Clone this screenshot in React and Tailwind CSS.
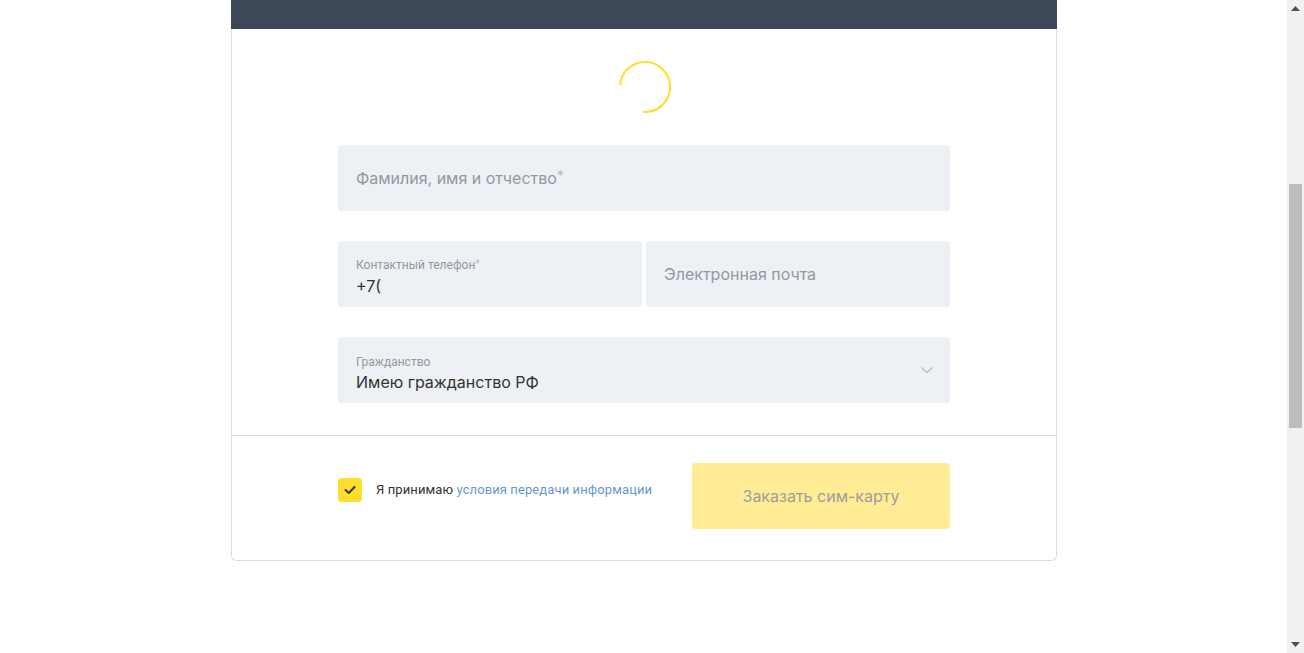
import React from "react";

const roboto = { fontFamily: "Roboto, 'Liberation Sans', Arial, sans-serif" };
const big = { fontFamily: "Inter, Roboto, 'Liberation Sans', Arial, sans-serif" };

function Field({ className = "", children }) {
  return (
    <div className={`h-[66px] rounded-[4px] bg-[#edf0f4] px-[18px] ${className}`}>
      {children}
    </div>
  );
}

export default function App() {
  return (
    <div className="flex h-[653px] w-[1304px] overflow-hidden bg-white" style={roboto}>
      <div className="flex-1 pl-[231px]">
        <div className="w-[826px]">
          <div className="h-[29px] bg-[#3d4758]" />
          <div className="rounded-b-[6px] border-x border-b border-[#dcdcdc]">
            <div className="flex justify-center pt-[32px] pb-[32px]">
              <svg width="52" height="52" viewBox="0 0 52 52" className="ml-[1px]">
                <circle
                  cx="26"
                  cy="26"
                  r="25"
                  fill="none"
                  stroke="#ffdd2d"
                  strokeWidth="2"
                  strokeDasharray="117 200"
                  transform="rotate(185 26 26)"
                />
              </svg>
            </div>
            <div className="flex flex-col gap-[30px] px-[106px] pb-[32px]">
              <Field className="flex items-center">
                <span className="text-[16px] text-[#9299a2]" style={big}>
                  Фамилия, имя и отчество<span className="relative top-[-3px] text-[14px] text-[#b4b9c0]">*</span>
                </span>
              </Field>
              <div className="flex gap-[4px]">
                <Field className="flex flex-1 flex-col justify-center pt-[5px]">
                  <span className="text-[12px] leading-[15px] text-[#9299a2]">
                    Контактный телефон<span className="relative top-[-2px] text-[10px] text-[#b4b9c0]">*</span>
                  </span>
                  <span className="mt-[3px] text-[16px] leading-[20px] text-[#333333]" style={big}>+7(</span>
                </Field>
                <Field className="flex flex-1 items-center">
                  <span className="text-[16px] text-[#9299a2]" style={big}>Электронная почта</span>
                </Field>
              </div>
              <Field className="flex items-center justify-between">
                <div className="flex flex-col pt-[7px]">
                  <span className="text-[12px] leading-[15px] text-[#9299a2]">Гражданство</span>
                  <span className="mt-[2px] text-[16px] leading-[20px] text-[#333333]" style={big}>Имею гражданство РФ</span>
                </div>
                <svg width="14" height="8" viewBox="0 0 14 8" className="mr-[-2px]">
                  <path d="M1.5 1.5 L7 6.5 L12.5 1.5" fill="none" stroke="#9299a2" strokeWidth="1" />
                </svg>
              </Field>
            </div>
            <div className="flex items-start justify-between border-t border-[#dcdcdc] px-[106px] pt-[27px] pb-[31px]">
              <div className="mt-[15px] flex items-center">
                <div className="flex h-[24px] w-[24px] items-center justify-center rounded-[4px] bg-[#ffdd2d]">
                  <svg width="14" height="12" viewBox="0 0 14 12">
                    <path d="M2.5 6 L5.8 9 L11.5 3" fill="none" stroke="#333333" strokeWidth="2" strokeLinecap="round" strokeLinejoin="round" />
                  </svg>
                </div>
                <span className="ml-[14px] text-[13px] tracking-[0.1px] text-[#333333]">
                  Я принимаю <span className="text-[#6699cc]">условия передачи информации</span>
                </span>
              </div>
              <div className="flex h-[66px] w-[258px] items-center justify-center rounded-[4px] bg-[#ffec94]">
                <span className="text-[16px] text-[#9d9d9d]" style={big}>Заказать сим-карту</span>
              </div>
            </div>
          </div>
        </div>
      </div>
      <div className="flex h-[653px] w-[17px] flex-col items-center bg-[#f1f1f1]">
        <div className="flex h-[17px] items-center justify-center">
          <svg width="9" height="5" viewBox="0 0 9 5"><path d="M0 5 L4.5 0 L9 5 Z" fill="#505050" /></svg>
        </div>
        <div className="mt-[167px] h-[244px] w-[13px] bg-[#bdbdbd]" />
        <div className="flex-1" />
        <div className="flex h-[17px] items-center justify-center">
          <svg width="9" height="5" viewBox="0 0 9 5"><path d="M0 0 L4.5 5 L9 0 Z" fill="#505050" /></svg>
        </div>
      </div>
    </div>
  );
}
